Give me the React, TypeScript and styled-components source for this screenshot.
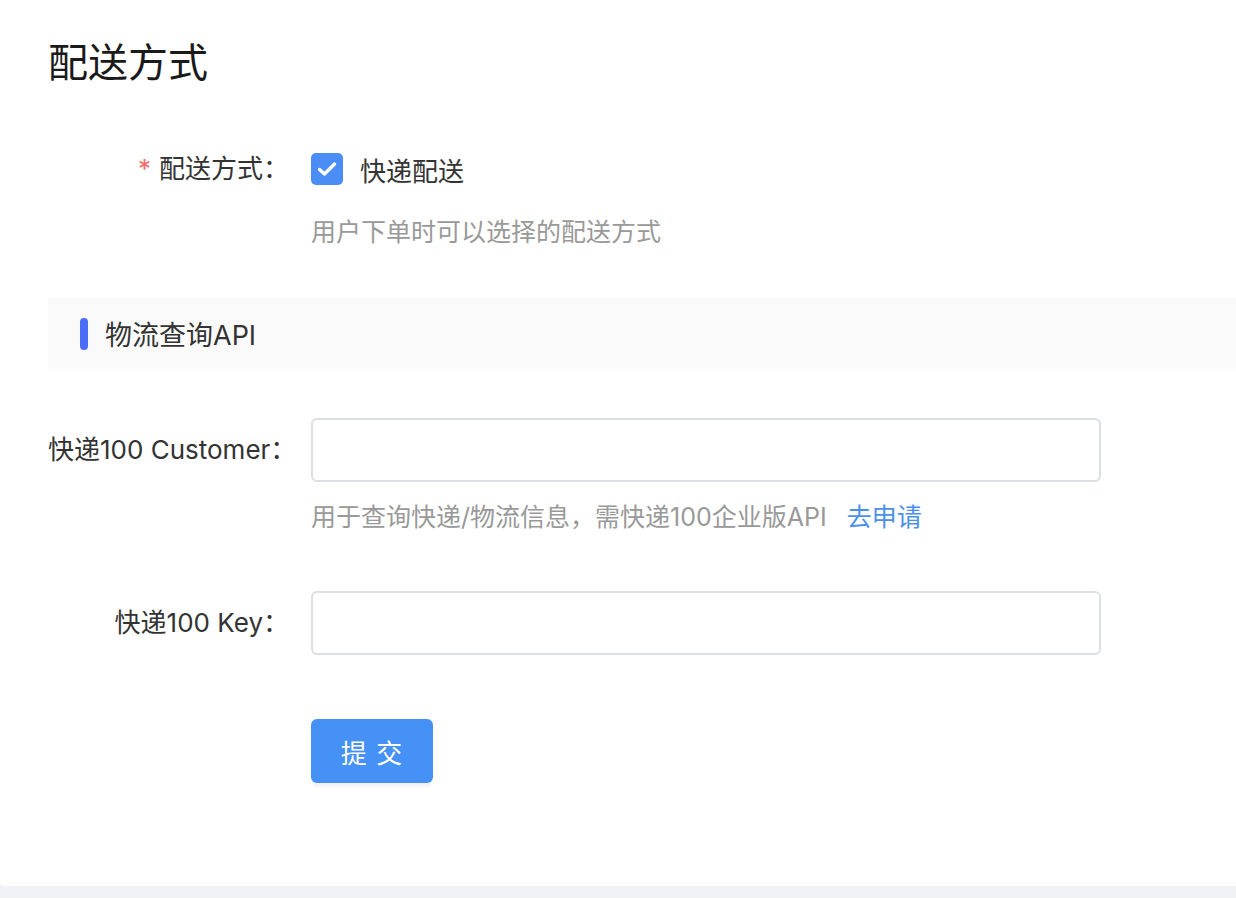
import React from "react";
import styled, { createGlobalStyle } from "styled-components";

const Global = createGlobalStyle`
  html, body { margin: 0; padding: 0; background: #f0f2f5; }
  body { font-family: Inter, "Noto Sans CJK SC", sans-serif; color: #333; }
  * { box-sizing: border-box; }
`;

const Card = styled.div`
  background: #fff;
  height: 886px;
  padding: 43px 0 0 48px;
  border-bottom-left-radius: 4px;
  display: flex;
  flex-direction: column;
`;

const Title = styled.h1`
  margin: 0;
  font-size: 40px;
  line-height: 40px;
  font-weight: 400;
  color: #1a1a1a;
`;

const Item = styled.div<{ $top: number }>`
  display: flex;
  align-items: flex-start;
  margin-top: ${(p) => p.$top}px;
`;

const Label = styled.div<{ $h: number }>`
  width: 263px;
  flex: none;
  padding-right: 22px;
  text-align: right;
  white-space: nowrap;
  font-size: 26px;
  line-height: ${(p) => p.$h}px;
  color: #333;
`;

const Star = styled.span`
  color: #f56c6c;
  margin-right: 8px;
`;

const Content = styled.div`
  display: flex;
  flex-direction: column;
`;

const CheckRow = styled.label`
  display: flex;
  align-items: center;
  gap: 17px;
  height: 32px;
  font-size: 26px;
  color: #333;
`;

const Box = styled.span`
  width: 32px;
  height: 32px;
  border-radius: 5px;
  background: #4a8ef5;
  display: flex;
  align-items: center;
  justify-content: center;
`;

const Help = styled.div<{ $top: number }>`
  margin-top: ${(p) => p.$top}px;
  font-size: 25px;
  line-height: 32px;
  color: #999;
  white-space: nowrap;
`;

const Link = styled.a`
  color: #4a90ea;
  margin-left: 20px;
  text-decoration: none;
`;

const Section = styled.div`
  margin-top: 50px;
  height: 71px;
  background: #fafafa;
  display: flex;
  align-items: center;
  padding-left: 32px;
  gap: 17px;
  font-size: 27px;
  color: #333;
`;

const Bar = styled.span`
  width: 8px;
  height: 32px;
  border-radius: 4px;
  background: #4a6cf7;
`;

const Input = styled.input`
  width: 790px;
  height: 64px;
  border: 2px solid #dcdfe6;
  border-radius: 6px;
  outline: none;
  font-size: 26px;
  padding: 0 20px;
  background: #fff;
`;

const Button = styled.button`
  width: 122px;
  height: 64px;
  border: none;
  border-radius: 6px;
  background: #4591f6;
  color: #fff;
  font-family: inherit;
  font-size: 26px;
  letter-spacing: 1px;
  box-shadow: 0 5px 3px -1px rgba(0, 0, 0, 0.05);
  cursor: pointer;
`;

export default function App() {
  return (
    <>
      <Global />
      <Card>
        <Title>配送方式</Title>
        <Item $top={70}>
          <Label $h={32}>
            <Star>*</Star>配送方式：
          </Label>
          <Content>
            <CheckRow>
              <Box>
                <svg width="20" height="16" viewBox="0 0 20 16">
                  <path d="M2.5 8.5 L7.5 13 L17.5 3" fill="none" stroke="#fff" strokeWidth="3.4" strokeLinecap="round" strokeLinejoin="round" />
                </svg>
              </Box>
              快递配送
            </CheckRow>
            <Help $top={31}>用户下单时可以选择的配送方式</Help>
          </Content>
        </Item>
        <Section>
          <Bar />
          物流查询API
        </Section>
        <Item $top={49}>
          <Label $h={64}>快递100 Customer：</Label>
          <Content>
            <Input />
            <Help $top={19}>
              用于查询快递/物流信息，需快递100企业版API<Link href="#">去申请</Link>
            </Help>
          </Content>
        </Item>
        <Item $top={58}>
          <Label $h={64}>快递100 Key：</Label>
          <Content>
            <Input />
          </Content>
        </Item>
        <Item $top={64}>
          <Label $h={64} />
          <Button>提 交</Button>
        </Item>
      </Card>
    </>
  );
}
